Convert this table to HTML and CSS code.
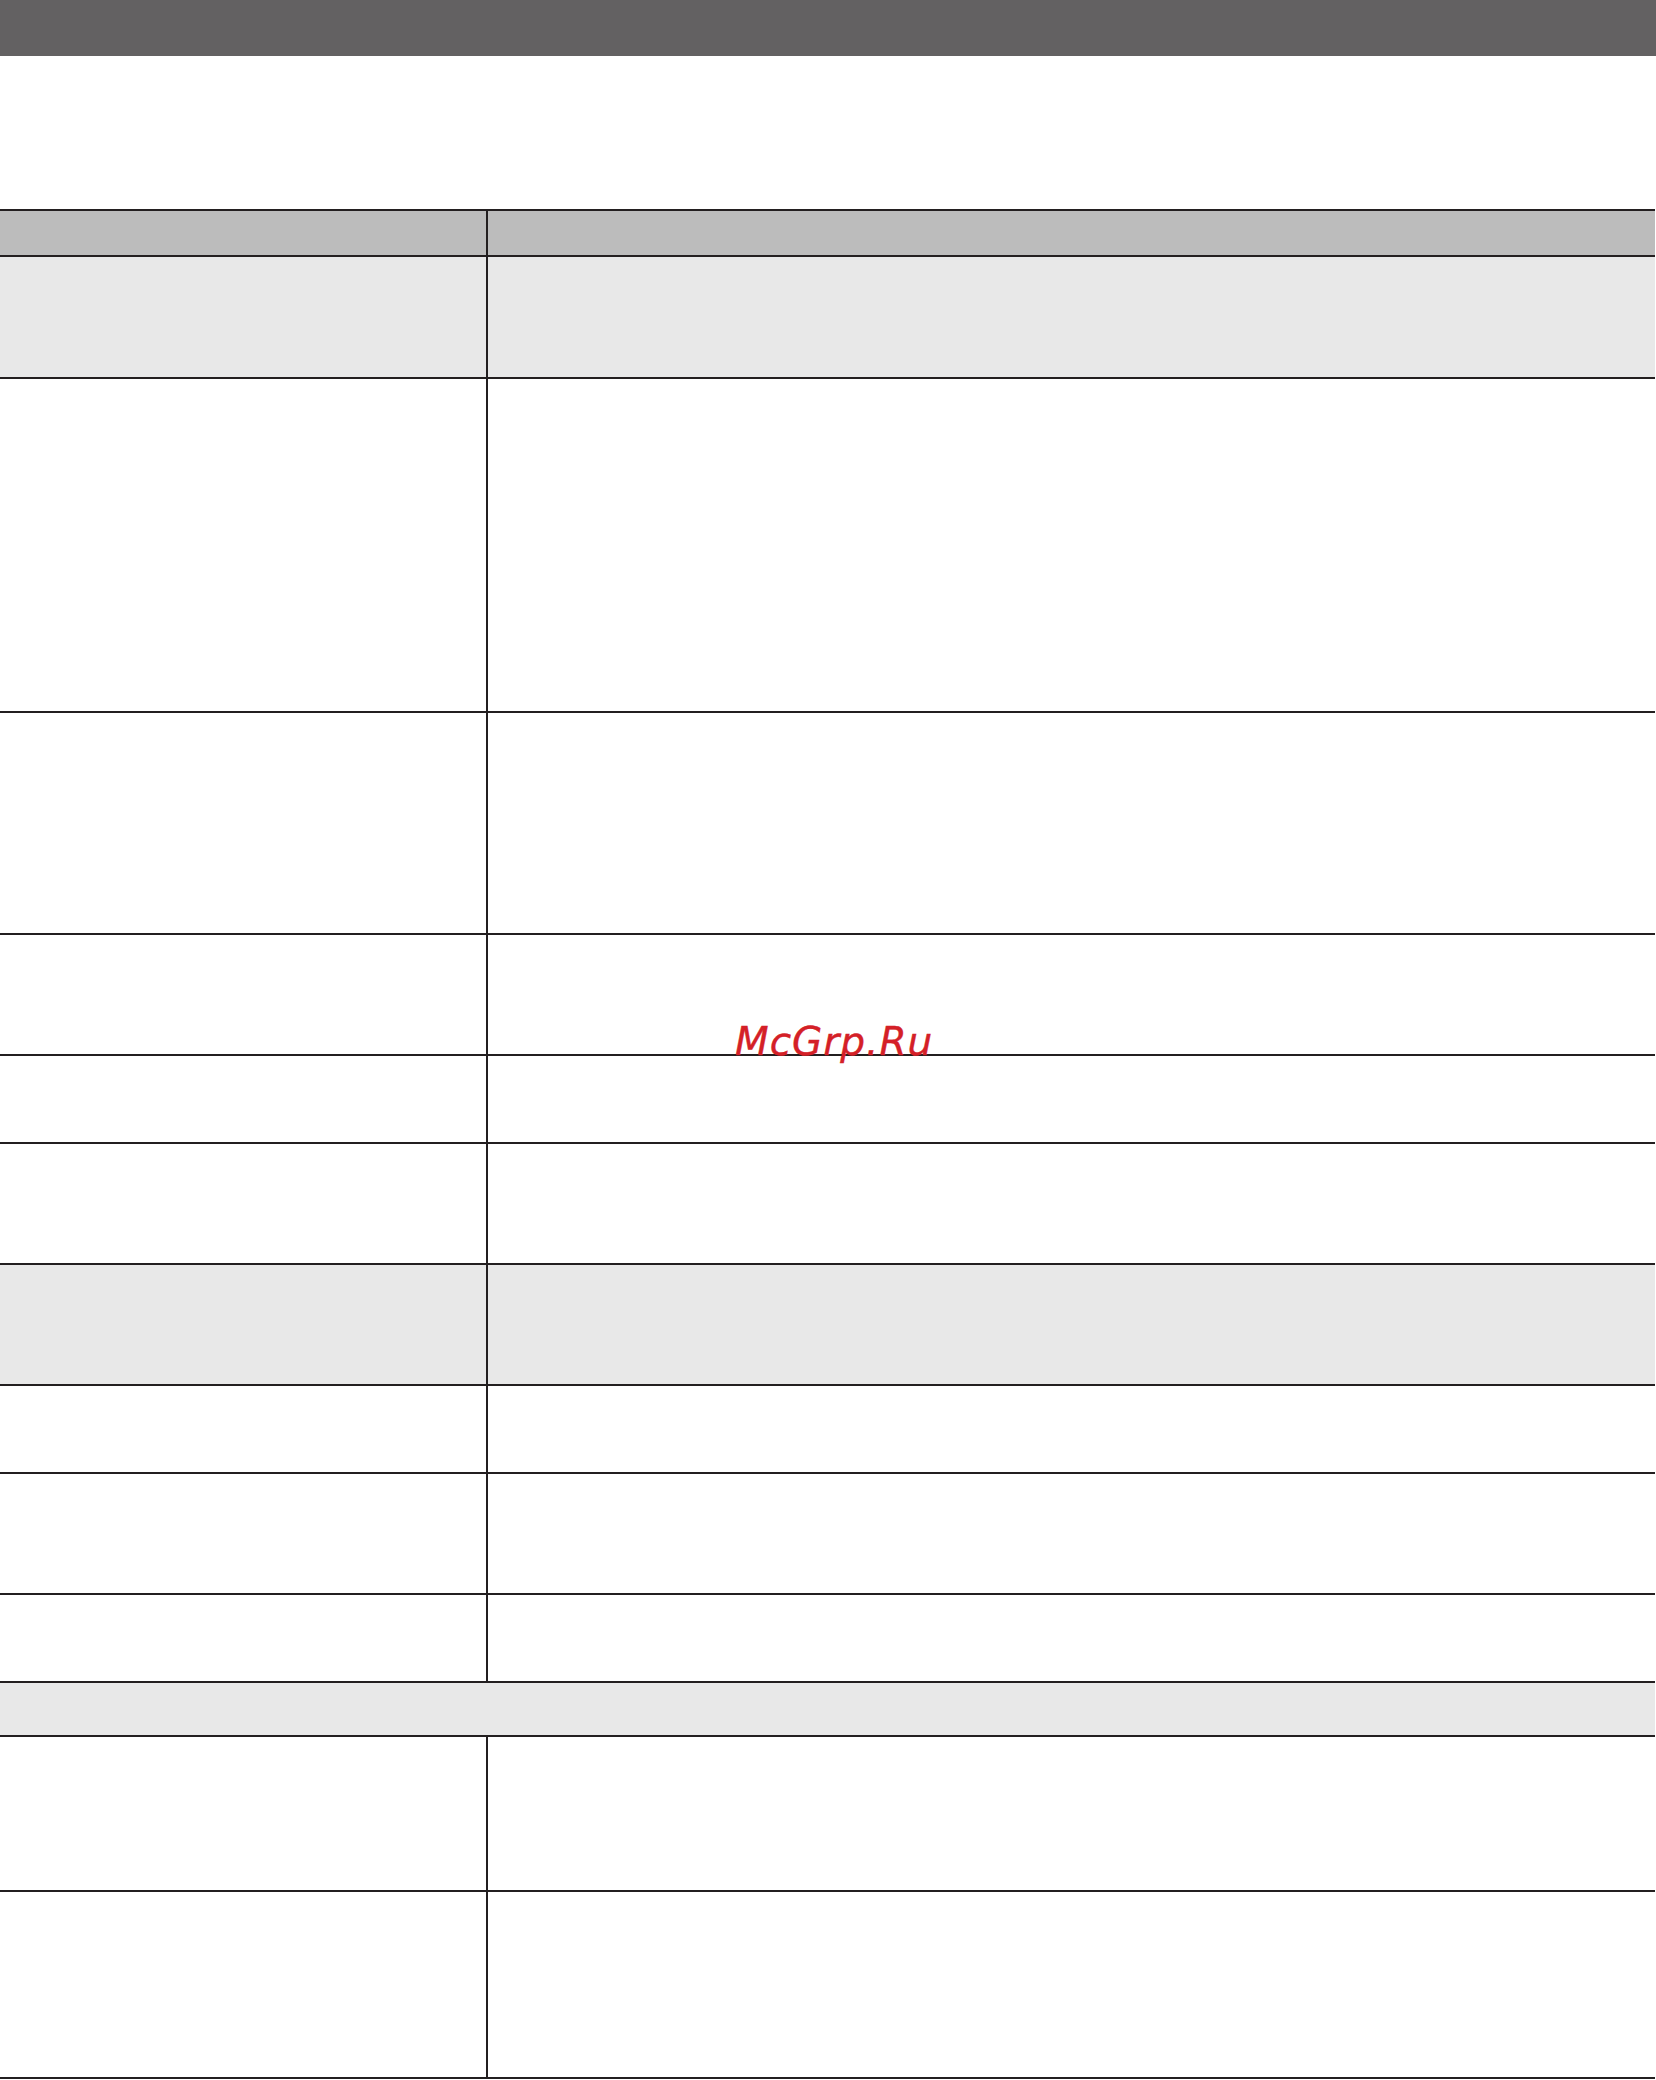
FILE: index.html
```html
<!DOCTYPE html>
<html lang="ru">
<head>
<meta charset="utf-8">
<title>Table</title>
<link rel="stylesheet" href="styles.css">
</head>
<body>
<div class="topbar"></div>
<main class="page">
  <div class="table">
    <div class="row head h44"><div class="c1"></div><div class="c2"></div></div>
    <div class="row shade h120"><div class="c1"></div><div class="c2"></div></div>
    <div class="row h332"><div class="c1"></div><div class="c2"></div></div>
    <div class="row h220"><div class="c1"></div><div class="c2"></div></div>
    <div class="row h119"><div class="c1"></div><div class="c2"></div></div>
    <div class="row h86"><div class="c1"></div><div class="c2"></div></div>
    <div class="row h119"><div class="c1"></div><div class="c2"></div></div>
    <div class="row shade h119"><div class="c1"></div><div class="c2"></div></div>
    <div class="row h86"><div class="c1"></div><div class="c2"></div></div>
    <div class="row h119"><div class="c1"></div><div class="c2"></div></div>
    <div class="row h86"><div class="c1"></div><div class="c2"></div></div>
    <div class="row shade full h52"><div class="cfull"></div></div>
    <div class="row h153"><div class="c1"></div><div class="c2"></div></div>
    <div class="row h185"><div class="c1"></div><div class="c2"></div></div>
  </div>
  <div class="watermark">McGrp.Ru</div>
</main>
</body>
</html>
```
FILE: styles.css
```css
html, body {
  margin: 0;
  padding: 0;
  background: #ffffff;
}
body {
  width: 1656px;
  font-family: "DejaVu Sans", sans-serif;
}
.topbar {
  height: 56px;
  background: #636162;
}
.page {
  position: relative;
  padding-top: 153px;
}
.table {
  width: 1655px;
  border-top: 2px solid #231f20;
}
.row {
  display: grid;
  grid-template-columns: 486px 2px 1fr;
  border-bottom: 2px solid #231f20;
  background: #ffffff;
}
.row .c1 { grid-column: 1; }
.row .c2 { grid-column: 3; }
.row::before {
  content: "";
  grid-column: 2;
  grid-row: 1;
  background: #231f20;
}
.row.full { grid-template-columns: 1fr; }
.row.full::before { display: none; }
.row.full .cfull { grid-column: 1; }
.head { background: #bcbcbc; }
.shade { background: #e8e8e8; }
.h44 { height: 44px; }
.h52 { height: 52px; }
.h86 { height: 86px; }
.h119 { height: 119px; }
.h120 { height: 120px; }
.h153 { height: 153px; }
.h185 { height: 185px; }
.h220 { height: 220px; }
.h332 { height: 332px; }
.watermark {
  position: absolute;
  left: 735px;
  top: 966px;
  font-family: "DejaVu Sans", sans-serif;
  font-style: italic;
  font-size: 39px;
  line-height: 39px;
  letter-spacing: 1px;
  color: #d42027;
  -webkit-text-stroke: 0.4px #d42027;
}
```
